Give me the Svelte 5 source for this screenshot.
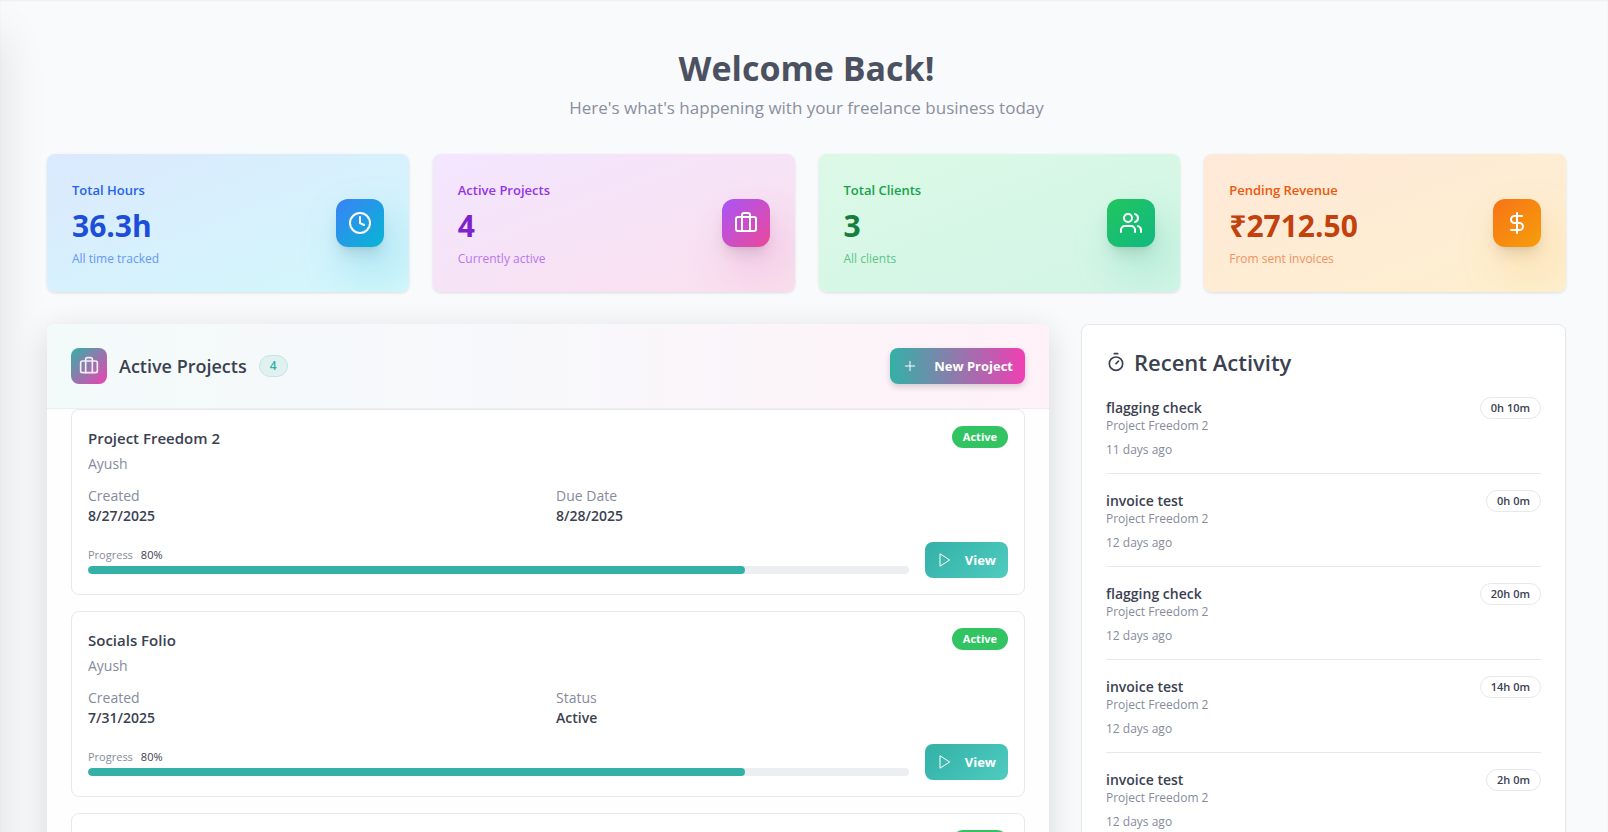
<script>
  const stats = [
    { tone: 'blue', label: 'Total Hours', value: '36.3h', note: 'All time tracked', icon: 'clock' },
    { tone: 'purple', label: 'Active Projects', value: '4', note: 'Currently active', icon: 'luggage' },
    { tone: 'green', label: 'Total Clients', value: '3', note: 'All clients', icon: 'users' },
    { tone: 'orange', label: 'Pending Revenue', value: '₹2712.50', note: 'From sent invoices', icon: 'dollar' }
  ];
  const projects = [
    { name: 'Project Freedom 2', client: 'Ayush', created: '8/27/2025', key: 'Due Date', detail: '8/28/2025', progress: 80 },
    { name: 'Socials Folio', client: 'Ayush', created: '7/31/2025', key: 'Status', detail: 'Active', progress: 80 },
    { name: 'Project Freedom', client: 'Ayush', created: '7/30/2025', key: 'Status', detail: 'Active', progress: 80 }
  ];
  const activity = [
    { title: 'flagging check', project: 'Project Freedom 2', when: '11 days ago', time: '0h 10m' },
    { title: 'invoice test', project: 'Project Freedom 2', when: '12 days ago', time: '0h 0m' },
    { title: 'flagging check', project: 'Project Freedom 2', when: '12 days ago', time: '20h 0m' },
    { title: 'invoice test', project: 'Project Freedom 2', when: '12 days ago', time: '14h 0m' },
    { title: 'invoice test', project: 'Project Freedom 2', when: '12 days ago', time: '2h 0m' }
  ];
</script>

{#snippet icon(name)}
  <svg class="icon" viewBox="0 0 24 24" aria-hidden="true">
    {#if name === 'clock'}
      <circle cx="12" cy="12" r="10" /><path d="M12 6v6l4 2" />
    {:else if name === 'luggage'}
      <rect x="2" y="6" width="20" height="14" rx="2" /><path d="M16 20V4a2 2 0 0 0-2-2h-4a2 2 0 0 0-2 2v16" />
    {:else if name === 'users'}
      <path d="M16 21v-2a4 4 0 0 0-4-4H6a4 4 0 0 0-4 4v2" /><circle cx="9" cy="7" r="4" />
      <path d="M22 21v-2a4 4 0 0 0-3-3.87M16 3.13a4 4 0 0 1 0 7.75" />
    {:else if name === 'dollar'}
      <path d="M12 2v20M17 5H9.500a3.500 3.500 0 0 0 0 7h5a3.500 3.500 0 0 1 0 7H6" />
    {:else if name === 'plus'}
      <path d="M5 12h14M12 5v14" />
    {:else if name === 'play'}
      <path d="M5 3l14 9-14 9z" />
    {:else if name === 'timer'}
      <path d="M10 2h4M12 14l3-3" /><circle cx="12" cy="14" r="8" />
    {/if}
  </svg>
{/snippet}

<div class="shell">
  <div class="rail"></div>
  <main>
    <header class="welcome">
      <h1>Welcome Back!</h1>
      <p>Here's what's happening with your freelance business today</p>
    </header>

    <section class="stats" aria-label="Statistics">
      {#each stats as s}
        <article class="stat {s.tone}">
          <div class="stat-text">
            <h2>{s.label}</h2>
            <strong>{s.value}</strong>
            <small>{s.note}</small>
          </div>
          <span class="tile">{@render icon(s.icon)}</span>
        </article>
      {/each}
    </section>

    <div class="columns">
      <section class="projects">
        <header class="projects-head">
          <span class="mini-tile">{@render icon('luggage')}</span>
          <h2>Active Projects</h2>
          <span class="pill count">4</span>
          <button class="action new" type="button">{@render icon('plus')}<span>New Project</span></button>
        </header>
        <div class="project-list">
          {#each projects as p}
            <article class="project">
              <div class="project-top">
                <div>
                  <h3>{p.name}</h3>
                  <p class="client">{p.client}</p>
                </div>
                <span class="pill active">Active</span>
              </div>
              <dl>
                <div><dt>Created</dt><dd>{p.created}</dd></div>
                <div><dt>{p.key}</dt><dd>{p.detail}</dd></div>
              </dl>
              <div class="project-foot">
                <div class="meter">
                  <div class="meter-text"><span>Progress</span><b>{p.progress}%</b></div>
                  <div class="bar" role="progressbar" aria-label="Progress" aria-valuenow={p.progress} aria-valuemin="0" aria-valuemax="100">
                    <div class="fill" style="width: {p.progress}%"></div>
                  </div>
                </div>
                <button class="action view" type="button">{@render icon('play')}<span>View</span></button>
              </div>
            </article>
          {/each}
        </div>
      </section>

      <section class="activity">
        <h2>{@render icon('timer')}<span>Recent Activity</span></h2>
        <ul>
          {#each activity as a}
            <li>
              <div>
                <h3>{a.title}</h3>
                <p>{a.project}</p>
                <p class="when">{a.when}</p>
              </div>
              <span class="pill time">{a.time}</span>
            </li>
          {/each}
        </ul>
      </section>
    </div>
  </main>
</div>

<style>
  :global(body) { background: #f9fafc; }
  .shell, .shell * { box-sizing: border-box; }
  .shell {
    position: relative;
    height: 100vh;
    overflow: hidden;
    background: #f9fafc;
    box-shadow: inset 0 1px 2px rgba(0, 0, 0, 0.05);
    color: #3b4150;
    font-family: "Open Sans", "Noto Sans", sans-serif;
    font-size: 14px;
    line-height: 20px;
  }
  h1, h2, h3, p, dl, dd, ul { margin: 0; padding: 0; font-weight: 400; }
  ul { list-style: none; }
  .rail {
    position: absolute;
    top: 36px;
    bottom: -60px;
    left: -40px;
    width: 40px;
    box-shadow: 0 0 48px rgba(0, 0, 0, 0.12);
  }
  .icon {
    width: 24px;
    height: 24px;
    flex: none;
    fill: none;
    stroke: currentColor;
    stroke-width: 2;
    stroke-linecap: round;
    stroke-linejoin: round;
  }
  main { position: relative; padding: 48px 42px 0 47px; }

  .welcome { text-align: center; margin-bottom: 32px; }
  h1 { margin-bottom: 6px; font-size: 34px; line-height: 40px; font-weight: 700; color: #4b5160; }
  .welcome p { font-size: 17px; line-height: 28px; color: #8a8fa0; }

  .stats { display: grid; grid-template-columns: repeat(4, 1fr); gap: 24px; margin-bottom: 32px; }
  .stat {
    display: flex;
    align-items: center;
    justify-content: space-between;
    padding: 25px;
    border-radius: 8px;
    box-shadow: 0 1px 3px rgba(0, 0, 0, 0.12);
    overflow: hidden;
  }
  .stat-text { display: flex; flex-direction: column; gap: 6px; }
  .stat h2 { font-size: 13px; line-height: 22px; font-weight: 600; }
  .stat strong { font-size: 30px; line-height: 38px; font-weight: 700; }
  .stat small { font-size: 12px; line-height: 16px; }
  .tile {
    display: grid;
    place-items: center;
    width: 48px;
    height: 48px;
    border-radius: 12px;
    color: #ffffff;
    box-shadow: 0 10px 15px -3px rgba(0, 0, 0, 0.1), 0 4px 6px -4px rgba(0, 0, 0, 0.1), 12px 24px 48px var(--glow);
    background: var(--tile);
  }
  .blue { --glow: rgba(14, 165, 220, 0.28); --tile: linear-gradient(135deg, #3b82f6, #06b6d4); background: linear-gradient(to bottom right, #dbe9fe, #d2f8fb); }
  .blue h2 { color: #2563eb; }
  .blue strong { color: #1d4ed8; }
  .blue small { color: #6498f4; }
  .purple { --glow: rgba(219, 70, 180, 0.24); --tile: linear-gradient(135deg, #a855f7, #ec4899); background: linear-gradient(to bottom right, #f3e6ff, #fae0ed); }
  .purple h2 { color: #9333ea; }
  .purple strong { color: #7e22ce; }
  .purple small { color: #b877ef; }
  .green { --glow: rgba(16, 185, 129, 0.24); --tile: linear-gradient(135deg, #22c55e, #10b981); background: linear-gradient(to bottom right, #dcf9e6, #d2f5e7); }
  .green h2 { color: #16a34a; }
  .green strong { color: #15803d; }
  .green small { color: #5dc486; }
  .orange { --glow: rgba(249, 160, 22, 0.22); --tile: linear-gradient(135deg, #f97316, #f59e0b); background: linear-gradient(to bottom right, #ffe8d8, #fdf0cf); }
  .orange h2 { color: #ea580c; }
  .orange strong { color: #c2410c; }
  .orange small { color: #f19260; }

  .columns { display: grid; grid-template-columns: repeat(3, 1fr); gap: 32px; align-items: start; }
  .projects {
    grid-column: span 2;
    border-radius: 8px;
    background: #fefefe;
    box-shadow: 0 8px 32px rgba(0, 0, 0, 0.14);
  }
  .projects-head {
    display: flex;
    align-items: center;
    gap: 12px;
    padding: 24px;
    border-bottom: 1px solid #ecedf1;
    border-radius: 8px 8px 0 0;
    background: linear-gradient(90deg, #f3fafa, #f8f8fb 50%, #fff1f8);
  }
  .projects-head h2 { font-size: 18px; line-height: 28px; font-weight: 600; color: #3b4150; }
  .mini-tile {
    display: grid;
    place-items: center;
    width: 36px;
    height: 36px;
    border-radius: 8px;
    color: #f7ecf8;
    background: linear-gradient(135deg, #33b1a6, #f03fb3);
  }
  .mini-tile .icon { width: 20px; height: 20px; }
  .pill {
    flex: none;
    padding: 2px 10px;
    border: 1px solid transparent;
    border-radius: 11px;
    font-size: 11px;
    line-height: 16px;
    font-weight: 600;
  }
  .count { color: #33b1a6; background: #e1f1f0; border-color: #c3e6e3; font-size: 12px; }
  .active { color: #ffffff; background: #32c463; font-weight: 700; }
  .time { border-color: #e7e8ec; }
  .action {
    display: flex;
    align-items: center;
    height: 36px;
    padding: 0 12px;
    border: 0;
    border-radius: 8px;
    color: #ffffff;
    font: inherit;
    font-size: 13px;
    font-weight: 700;
    cursor: pointer;
  }
  .action .icon { width: 16px; height: 16px; stroke-width: 1.5; }
  .new { gap: 16px; margin-left: auto; background: linear-gradient(90deg, #33b1a6, #f03fb3); box-shadow: 0 3px 6px rgba(0, 0, 0, 0.16); }
  .view { gap: 12px; background: linear-gradient(135deg, #33b1a6, #4fcbc0); }

  .project-list { display: grid; gap: 16px; padding: 0 24px 24px; }
  .project { padding: 16px; border: 1px solid #e7e8ec; border-radius: 8px; background: #ffffff; }
  .project-top { display: flex; align-items: flex-start; justify-content: space-between; margin-bottom: 12px; }
  .project h3 { margin-bottom: 4px; font-size: 15px; line-height: 24px; font-weight: 600; }
  .client, dt { color: #868b9c; }
  dl { display: grid; grid-template-columns: 1fr 1fr; gap: 16px; margin-bottom: 16px; }
  dd { font-weight: 600; }
  .project-foot { display: flex; align-items: center; gap: 16px; }
  .meter { flex: 1; display: grid; gap: 2px; }
  .meter-text { display: flex; gap: 8px; font-size: 11px; line-height: 18px; color: #868b9c; }
  .meter-text b { font-weight: 500; color: #3b4150; }
  .bar { height: 8px; border-radius: 4px; background: #edeef2; overflow: hidden; }
  .fill { height: 8px; border-radius: 4px; background: #33b1a6; }

  .activity {
    padding: 24px;
    border: 1px solid #e7e8ec;
    border-radius: 8px;
    background: #ffffff;
    box-shadow: 0 1px 2px rgba(0, 0, 0, 0.05);
  }
  .activity h2 { display: flex; align-items: center; gap: 8px; margin-bottom: 22px; font-size: 22px; line-height: 26px; font-weight: 600; color: #3b4150; }
  .activity h2 .icon { width: 20px; height: 20px; }
  .activity li { display: flex; align-items: flex-start; justify-content: space-between; padding-bottom: 15px; }
  .activity li + li { padding-top: 16px; border-top: 1px solid #e7e8ec; }
  .activity h3 { font-size: 14px; line-height: 21px; font-weight: 600; }
  .activity p { font-size: 12px; line-height: 16px; color: #868b9c; }
  .activity .when { margin-top: 8px; }
</style>
